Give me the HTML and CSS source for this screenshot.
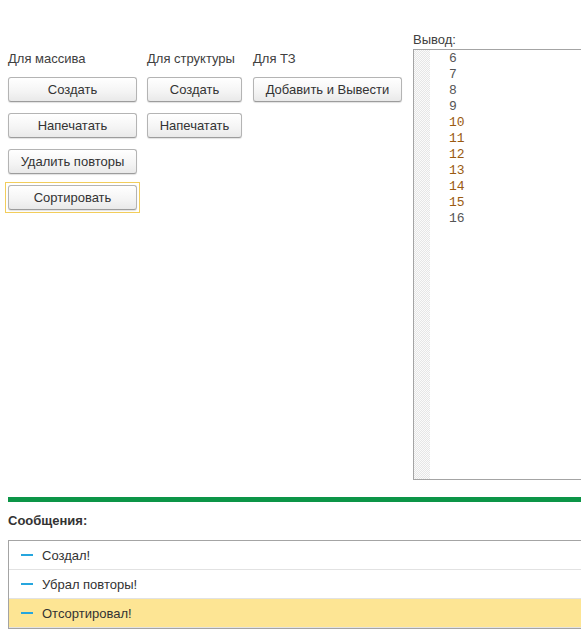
FILE: index.html
```html
<!DOCTYPE html>
<html lang="ru">
<head>
<meta charset="utf-8">
<link rel="stylesheet" href="styles.css">
</head>
<body>
<div class="page">
  <div class="top">
    <div class="groups">
      <div class="group group-array">
        <div class="label">Для массива</div>
        <button class="btn">Создать</button>
        <button class="btn">Напечатать</button>
        <button class="btn">Удалить повторы</button>
        <div class="focus-frame"><button class="btn">Сортировать</button></div>
      </div>
      <div class="group group-struct">
        <div class="label">Для структуры</div>
        <button class="btn">Создать</button>
        <button class="btn">Напечатать</button>
      </div>
      <div class="group group-tz">
        <div class="label">Для ТЗ</div>
        <button class="btn">Добавить и Вывести</button>
      </div>
    </div>
    <div class="output">
      <div class="label">Вывод:</div>
      <div class="textbox">
        <div class="gutter"></div>
        <div class="lines">
          <div class="ln">6</div>
          <div class="ln">7</div>
          <div class="ln">8</div>
          <div class="ln">9</div>
          <div class="ln hl">10</div>
          <div class="ln hl">11</div>
          <div class="ln hl">12</div>
          <div class="ln hl">13</div>
          <div class="ln hl">14</div>
          <div class="ln hl">15</div>
          <div class="ln">16</div>
        </div>
      </div>
    </div>
  </div>
  <div class="greenbar"></div>
  <div class="msg-title">Сообщения:</div>
  <div class="messages">
    <div class="msg"><span class="dash"></span><span>Создал!</span></div>
    <div class="msg"><span class="dash"></span><span>Убрал повторы!</span></div>
    <div class="msg current"><span class="dash"></span><span>Отсортировал!</span></div>
  </div>
</div>
</body>
</html>
```

FILE: styles.css
```css
html, body {
  margin: 0;
  padding: 0;
  background: #fff;
  overflow: hidden;
}
body {
  width: 581px;
  height: 636px;
  font-family: "Liberation Sans", Arial, sans-serif;
  font-size: 13px;
  color: #333;
}
.page {
  padding: 32px 0 0 8px;
}
.top {
  display: flex;
  gap: 11px;
  height: 448px;
}
.groups {
  display: flex;
  gap: 11px;
  padding-top: 19px;
}
.group {
  display: flex;
  flex-direction: column;
  gap: 11px;
}
.group-array { width: 129px; }
.group-struct { width: 95px; }
.group-tz { width: 149px; }
.group-array + .group-struct { margin-left: -1px; }
.label {
  line-height: 16px;
  height: 16px;
  color: #404040;
  white-space: nowrap;
}
.group .label {
  margin-bottom: -1px;
}
.btn {
  display: block;
  width: 100%;
  height: 25px;
  margin: 0;
  padding: 0;
  font-family: inherit;
  font-size: 13px;
  color: #333;
  border: 1px solid #b4b4b4;
  border-bottom-color: #9c9c9c;
  border-radius: 3px;
  background: linear-gradient(#ffffff, #f4f4f4 60%, #e9e9e9);
  box-shadow: 0 1px 1px rgba(0,0,0,0.12);
  line-height: 22px;
  white-space: nowrap;
}
.focus-frame {
  margin: -3px;
  padding: 2px;
  border: 1px solid #f2cd5c;
}
.output {
  flex: 1;
  display: flex;
  flex-direction: column;
  gap: 1px;
  min-width: 0;
}
.textbox {
  display: flex;
  height: 431px;
  box-sizing: border-box;
  border: 1px solid #a4a4a4;
  border-right: none;
  background: #fff;
}
.gutter {
  width: 16px;
  background: repeating-conic-gradient(#e6e6e6 0 25%, #fbfbfb 0 50%) 0 0 / 2px 2px;
}
.lines {
  padding: 1px 0 0 19px;
  font-family: "Liberation Mono", "Courier New", monospace;
  font-size: 13px;
  line-height: 16px;
  color: #555;
}
.ln.hl {
  color: #9a5a10;
}
.greenbar {
  height: 5px;
  margin-top: 17px;
  background: #0c9547;
}
.msg-title {
  margin-top: 11px;
  font-weight: bold;
  line-height: 16px;
  color: #333;
}
.messages {
  margin-top: 11px;
  border: 1px solid #a4a4a4;
  border-right: none;
}
.msg {
  display: flex;
  align-items: center;
  height: 28px;
  border-bottom: 1px solid #e2e2e2;
  color: #333;
}
.msg.current {
  background: #fde594;
}
.dash {
  width: 12px;
  height: 2px;
  margin: 0 9px 0 12px;
  background: #26a6de;
}
```
